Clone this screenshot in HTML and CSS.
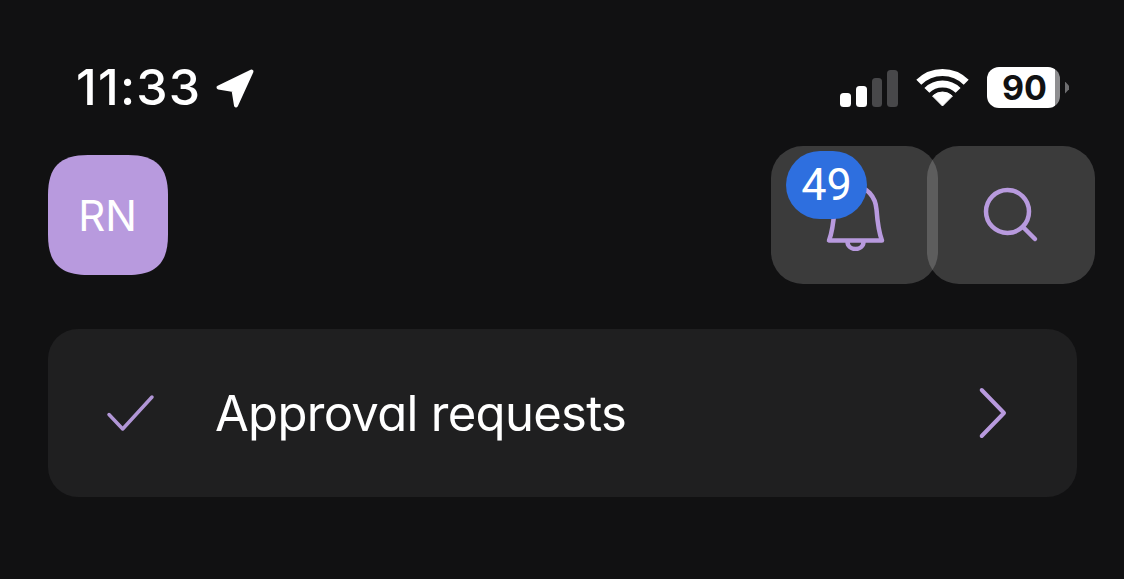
FILE: index.html
```
<!DOCTYPE html>
<html lang="en">
<head>
<meta charset="utf-8">
<title>Approval requests</title>
<link rel="stylesheet" href="styles.css">
</head>
<body>
<header class="status">
  <div class="status-left">
    <span class="time">11:33</span>
    <svg class="loc" viewBox="215 67 42 42"><path d="M252.5 71.5 219.5 87.5 234.5 90 237 105.5Z"/></svg>
  </div>
  <div class="status-right">
    <div class="signal">
      <i class="bar b1"></i><i class="bar b2"></i><i class="bar b3"></i><i class="bar b4"></i>
    </div>
    <svg class="wifi" viewBox="915 67 55 41">
      <path class="wifi-arc" d="M918.8 82.3A33.5 33.5 0 0 1 966.2 82.3"/>
      <path class="wifi-arc" d="M926.9 90.4A22 22 0 0 1 958.1 90.4"/>
      <path class="wifi-dot" d="M942.5 106 932.6 96.1A14 14 0 0 1 952.4 96.1Z"/>
    </svg>
    <div class="battery"><span class="battery-level">90</span></div>
    <i class="battery-tip"></i>
  </div>
</header>

<section class="top">
  <div class="avatar">RN</div>
  <div class="actions">
    <button class="action action-bell">
      <svg class="icon" viewBox="822.5 178.5 64 72">
        <path d="M828.5 240H881.5C879.5 235 877 222 876 209C875 196 866 186 855 186C844 186 835 196 834 209C833 222 830.5 235 828.5 240Z"/>
        <path d="M847 241C847 251 863 251 863 241"/>
      </svg>
      <span class="badge">49</span>
    </button>
    <button class="action action-search">
      <svg class="icon" viewBox="980.5 184.5 60 60">
        <circle cx="1007" cy="211" r="21.5"/>
        <path d="M1022.5 226.5 1034.5 238.5"/>
      </svg>
    </button>
  </div>
</section>

<a class="card">
  <svg class="check" viewBox="105 392 52 40"><path d="M109 413.5 122.7 428 152 396"/></svg>
  <span class="card-label">Approval requests</span>
  <svg class="chevron" viewBox="978 386 30 54"><path d="M981.7 390 1004 413 981.7 436"/></svg>
</a>
</body>
</html>
```
FILE: styles.css
```
* { box-sizing: border-box; }
html, body { margin: 0; height: 100%; }
body {
  background: #111112;
  color: #fff;
  font-family: Inter, "Liberation Sans", sans-serif;
  overflow: hidden;
}

.status {
  display: flex;
  justify-content: space-between;
  align-items: center;
  height: 41px;
  margin-top: 67px;
  padding: 0 55px 0 76px;
}
.status-left, .status-right { display: flex; align-items: center; }
.time { font-size: 50px; font-weight: 550; line-height: 41px; letter-spacing: 1.2px; }
.loc { width: 42px; height: 42px; margin-left: 13px; }
.loc path { fill: #fff; stroke: #fff; stroke-width: 4; stroke-linejoin: round; }

.signal { display: flex; align-items: flex-end; gap: 5px; height: 37px; margin-top: 1px; }
.bar { display: block; width: 10.75px; border-radius: 3.5px; background: #fff; }
.b1 { height: 14px; }
.b2 { height: 21px; }
.b3 { height: 29px; background: #48484a; }
.b4 { height: 37px; background: #48484a; }
.wifi { width: 55px; height: 41px; margin-left: 17px; }
.wifi-arc { fill: none; stroke: #fff; stroke-width: 7; }
.wifi-dot { fill: #fff; stroke: #fff; stroke-width: 1; stroke-linejoin: round; }
.battery {
  width: 73px;
  height: 41px;
  margin-left: 17px;
  border-radius: 12px;
  background: linear-gradient(90deg, #fff 68px, #8e8e90 68px);
  color: #111112;
  font-weight: 700;
  font-size: 34px;
  line-height: 41px;
  padding-left: 15px;
}
.battery-tip {
  display: block;
  width: 4px;
  height: 12px;
  margin-left: 5px;
  background: #6e6e70;
  clip-path: polygon(0 0, 100% 35%, 100% 65%, 0 100%);
}

.top {
  display: flex;
  justify-content: space-between;
  align-items: center;
  height: 138px;
  margin-top: 38px;
  padding: 0 29px 0 48px;
}
.avatar {
  display: flex;
  align-items: center;
  justify-content: center;
  width: 120px;
  height: 120px;
  padding-right: 1px;
  background: #b89ade;
  color: #fff;
  font-size: 42px;
  clip-path: path("M40 0H80C108 0 120 12 120 40V80C120 108 108 120 80 120H40C12 120 0 108 0 80V40C0 12 12 0 40 0Z");
}
.actions { display: flex; }
.action {
  position: relative;
  display: flex;
  align-items: center;
  justify-content: center;
  width: 167px;
  height: 138px;
  padding: 0;
  border: 0;
  border-radius: 32px;
  background: rgba(255, 255, 255, 0.175);
}
.action-search { margin-left: -11px; width: 168px; }
.icon { display: block; fill: none; stroke: #b89ade; stroke-width: 4.5; stroke-linecap: round; stroke-linejoin: round; }
.action-bell .icon { width: 64px; height: 72px; }
.action-search .icon { width: 60px; height: 60px; }
.badge {
  position: absolute;
  left: 15px;
  top: 5px;
  width: 81px;
  height: 68px;
  border-radius: 34px;
  background: #2e6fdf;
  color: #fff;
  font-family: Roboto, Inter, sans-serif;
  font-size: 45px;
  line-height: 68px;
  text-align: center;
}

.card {
  display: flex;
  align-items: center;
  width: 1029px;
  height: 168px;
  margin: 45px 0 0 48px;
  padding: 0 69px 0 57px;
  border-radius: 30px;
  background: #1f1f20;
}
.check { width: 52px; height: 40px; fill: none; stroke: #b196d6; stroke-width: 3.5; stroke-linecap: round; stroke-linejoin: round; }
.card-label {
  flex: 1;
  margin-left: 58px;
  font-size: 49px;
  font-weight: 400;
  font-feature-settings: "cv11";
  letter-spacing: -0.7px;
  color: #fff;
}
.chevron { width: 30px; height: 54px; fill: none; stroke: #b89ade; stroke-width: 4; stroke-linecap: round; stroke-linejoin: round; }
```
